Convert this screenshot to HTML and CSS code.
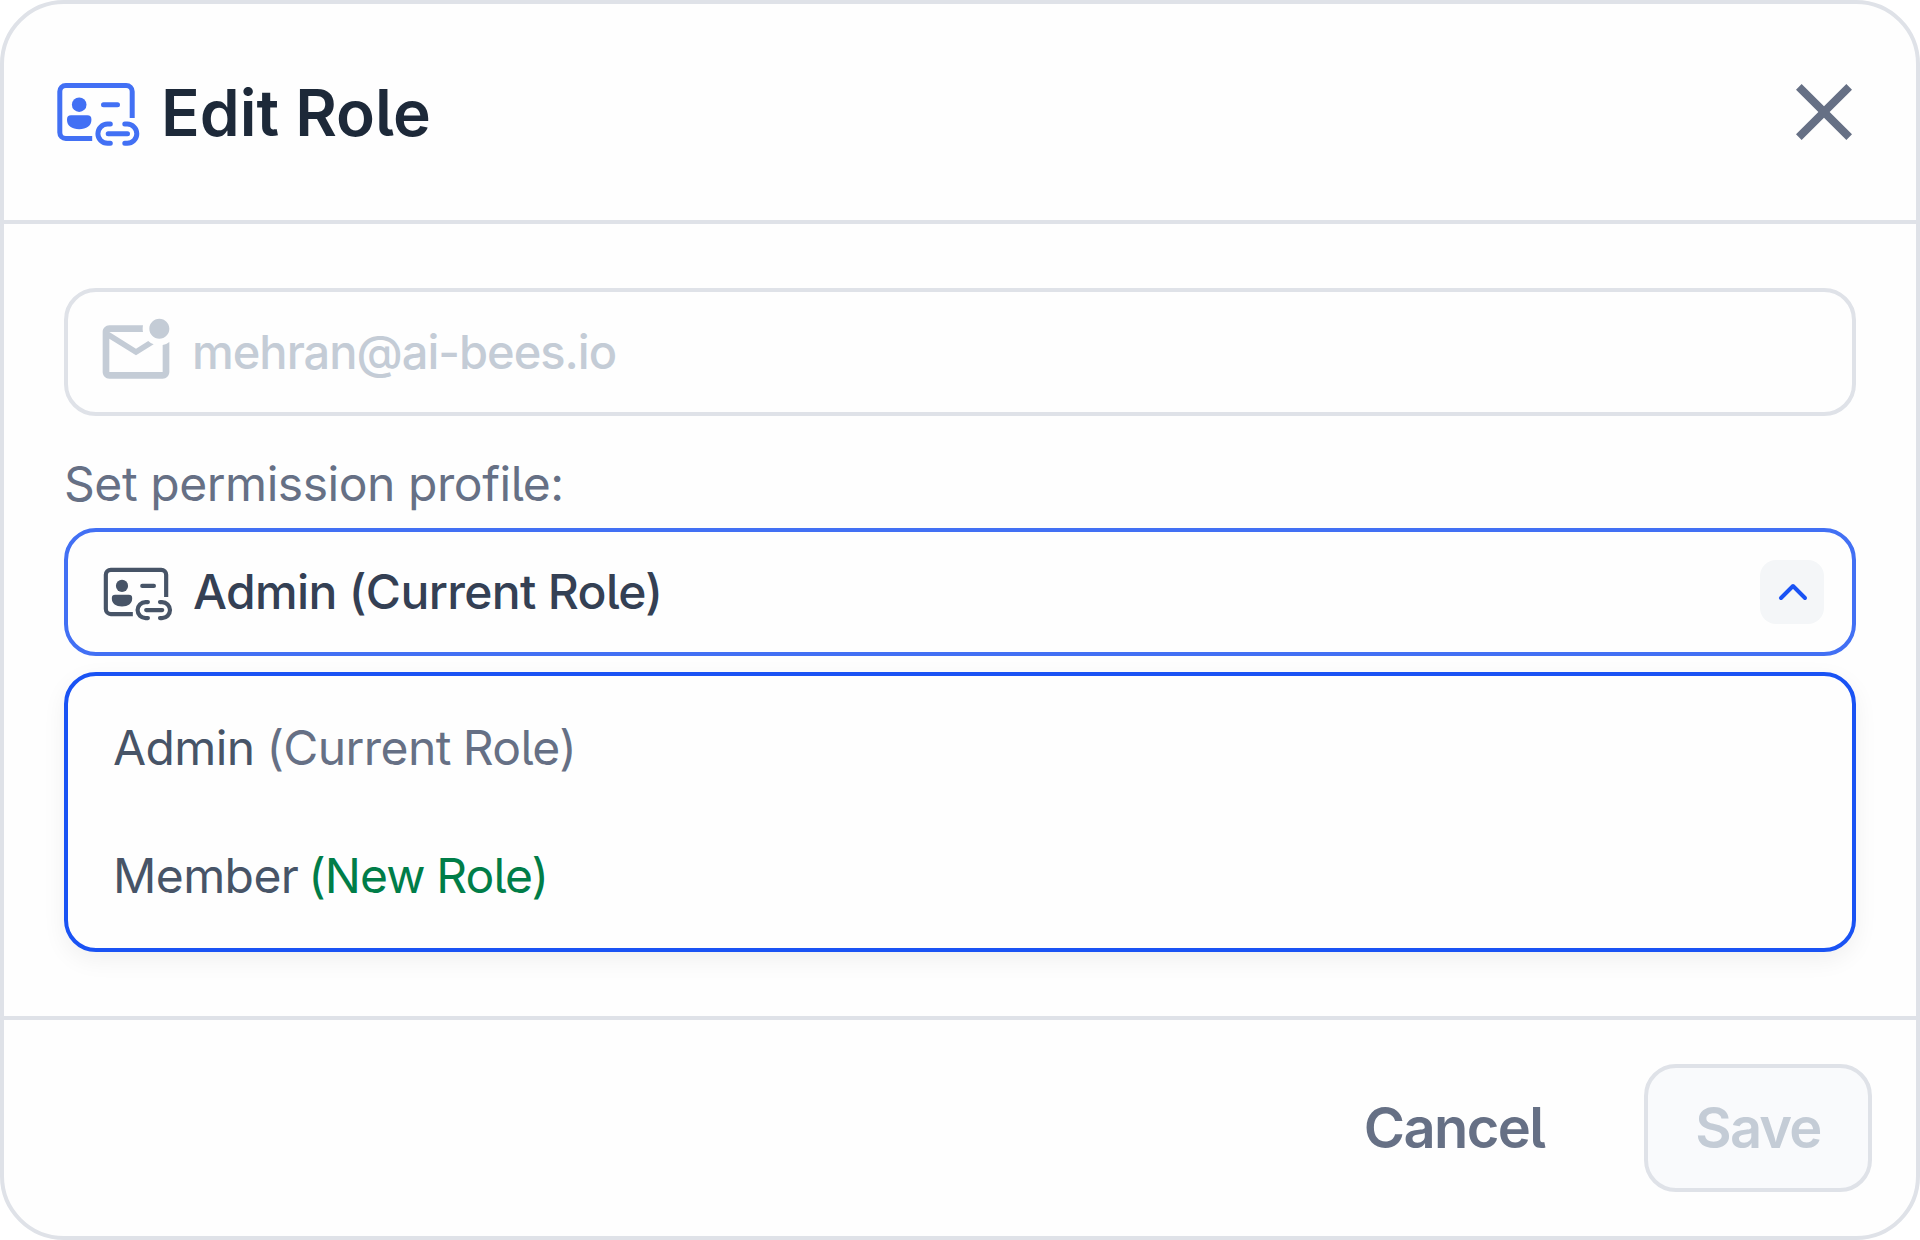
FILE: index.html
```html
<!DOCTYPE html>
<html lang="en">
<head>
    <meta charset="UTF-8">
    <title>Edit Role</title>
    <link rel="stylesheet" href="styles.css">
</head>
<body>
    <!-- Role icon, shared by the header and the select -->
    <svg class="symbols" aria-hidden="true">
        <symbol id="icon-role" viewBox="0 0 96 96">
            <g fill="none" stroke="currentColor" stroke-width="5">
                <path d="M44.2 74.5H17.8a6 6 0 0 1-6-6V27.4a6 6 0 0 1 6-6h60.4a6 6 0 0 1 6 6V54"/>
                <path stroke-linecap="round" d="M55.5 40.7h14M62.3 60.1h-2.8a9.6 9.6 0 0 0 0 19.2h2.8M76.8 60.1h2.4a9.6 9.6 0 0 1 0 19.2h-2.4M60.2 69.7h19.3"/>
            </g>
            <g fill="currentColor">
                <circle cx="31.2" cy="40.7" r="7.3"/>
                <path d="M23 51.3h16.4a4 4 0 0 1 4 4v.8c0 5.8-5 9.2-12.2 9.2s-12.2-3.4-12.2-9.2v-.8a4 4 0 0 1 4-4z"/>
            </g>
        </symbol>
    </svg>

    <div class="modal">
        <div class="modal-header">
            <svg class="header-icon"><use href="#icon-role"/></svg>
            <h1>Edit Role</h1>
            <svg class="close" viewBox="0 0 24 24"><path fill="currentColor" d="M19 6.41 17.59 5 12 10.59 6.41 5 5 6.41 10.59 12 5 17.59 6.41 19 12 13.41 17.59 19 19 17.59 13.41 12z"/></svg>
        </div>

        <div class="modal-body">
            <div class="field field-disabled">
                <svg class="field-icon" viewBox="0 0 24 24"><path fill="currentColor" d="M22 8.98V18c0 1.1-.9 2-2 2H4c-1.1 0-2-.9-2-2V6c0-1.1.9-2 2-2h10.1c-.06.32-.1.66-.1 1s.04.68.1 1H4l8 5 3.67-2.29c.47.43 1.02.76 1.63.98L12 13 4 8v10h16V9.9c.74-.15 1.42-.48 2-.92zM16 5c0 1.66 1.34 3 3 3s3-1.34 3-3-1.34-3-3-3-3 1.34-3 3z"/></svg>
                <span class="field-text email">mehran@ai-bees.io</span>
            </div>

            <div class="label">Set permission profile:</div>

            <div class="field field-open">
                <svg class="field-icon role-icon"><use href="#icon-role"/></svg>
                <span class="field-text">Admin (Current Role)</span>
                <span class="toggle">
                    <svg viewBox="0 0 64 64"><path d="M21 38l12-12 12 12"/></svg>
                </span>
            </div>

            <div class="menu">
                <div class="option">Admin <span class="current">(Current Role)</span></div>
                <div class="option">Member <span class="new">(New Role)</span></div>
            </div>
        </div>

        <div class="modal-footer">
            <button type="button" class="cancel">Cancel</button>
            <button type="button" class="save" disabled>Save</button>
        </div>
    </div>
</body>
</html>
```
FILE: styles.css
```css
* {
    box-sizing: border-box;
}

body {
    margin: 0;
    background: #fff;
    font-family: Inter, "Liberation Sans", sans-serif;
    font-size: 48px;
    font-feature-settings: "cv05";
}

.symbols {
    display: block;
    width: 0;
    height: 0;
}

.modal {
    display: flex;
    flex-direction: column;
    width: 1920px;
    height: 1240px;
    border: 4px solid #dfe2e8;
    border-radius: 64px;
    background: #fefefe;
}

/* Header */
.modal-header {
    display: flex;
    align-items: center;
    height: 220px;
    padding: 0 44px;
    border-bottom: 4px solid #dfe2e8;
}

.header-icon {
    width: 96px;
    height: 96px;
    color: #4270f4;
}

h1 {
    flex: 1;
    margin: 1px 0 0 17px;
    font-size: 64px;
    font-weight: 600;
    line-height: 96px;
    color: #1d2939;
}

.close {
    width: 96px;
    height: 96px;
    color: #667085;
}

/* Body */
.modal-body {
    flex: 1;
    padding: 64px 60px 0;
}

.field {
    display: flex;
    align-items: center;
    height: 128px;
    padding: 0 28px;
    border: 4px solid #dfe2e8;
    border-radius: 32px;
}

.field-icon {
    width: 80px;
    height: 80px;
    margin-right: 17px;
}

.field-text {
    padding-bottom: 2px;
    font-weight: 500;
    letter-spacing: -0.65px;
}

.email {
    margin-left: -1px;
    font-size: 47px;
    letter-spacing: -1px;
}

.field-disabled {
    color: #c4ccd6;
}

.field-open {
    border-color: #4270f4;
    color: #344054;
}

.role-icon {
    color: #475467;
}

.toggle {
    width: 64px;
    height: 64px;
    margin-left: auto;
    border-radius: 16px;
    background: #f4f6f8;
}

.toggle svg {
    display: block;
    fill: none;
    stroke: #1a53f4;
    stroke-width: 4;
    stroke-linecap: round;
    stroke-linejoin: round;
}

.label {
    height: 80px;
    margin-top: 32px;
    line-height: 72px;
    letter-spacing: -0.45px;
    color: #667085;
}

.menu {
    height: 280px;
    margin-top: 16px;
    padding: 8px 45px;
    border: 4px solid #1a53f4;
    border-radius: 32px;
    background: #fefefe;
    box-shadow: 0 8px 24px rgba(0, 0, 0, 0.06);
}

.option {
    height: 128px;
    line-height: 128px;
    letter-spacing: -0.6px;
    word-spacing: -1px;
    color: #475467;
}

.option .current {
    color: #667085;
}

.option .new {
    margin-left: -2px;
    letter-spacing: -0.9px;
    color: #007d48;
}

/* Footer */
.modal-footer {
    display: flex;
    align-items: center;
    justify-content: flex-end;
    height: 220px;
    padding: 0 44px;
    border-top: 4px solid #dfe2e8;
}

button {
    height: 128px;
    padding: 0;
    border: 4px solid transparent;
    border-radius: 32px;
    background: none;
    font: inherit;
    font-size: 56px;
    font-weight: 600;
    color: #667085;
}

.cancel {
    width: 276px;
    margin-right: 52px;
    letter-spacing: -1.6px;
}

.save {
    width: 228px;
    border-color: #dfe2e8;
    background: #f9fafc;
    letter-spacing: -1.8px;
    color: #c4ccd6;
}
```
